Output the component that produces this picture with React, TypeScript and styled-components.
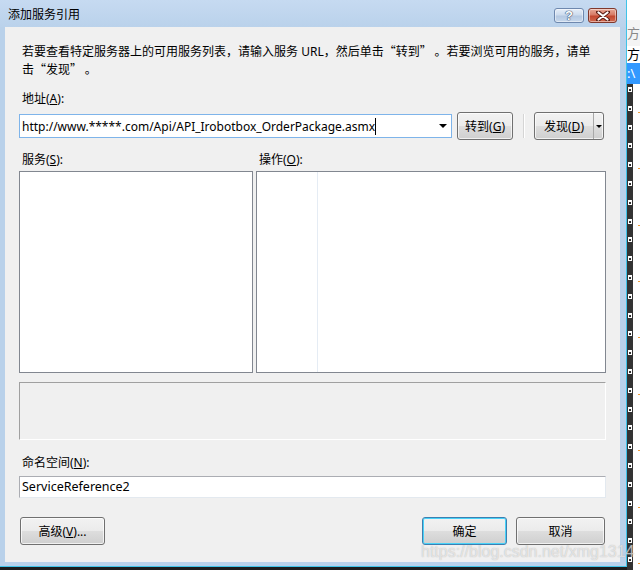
import React from "react";
import styled, { createGlobalStyle } from "styled-components";

const GlobalStyle = createGlobalStyle`
  html, body {
    margin: 0;
    padding: 0;
    background: #1c1c1c;
  }
  body {
    width: 640px;
    height: 570px;
    overflow: hidden;
    font-family: "Noto Sans", "Noto Sans CJK SC", sans-serif;
    font-size: 12px;
    color: #000;
  }
`;

const Screen = styled.div`
  display: flex;
  width: 640px;
  height: 570px;
  overflow: hidden;
`;

const Window = styled.div`
  position: relative;
  width: 626px;
  height: 566px;
  display: flex;
  flex-direction: column;
  background: #b9d1ea;
  border-right: 1px solid #3fc3e8;
  border-bottom: 1px solid #3fc3e8;
  flex-shrink: 0;
`;

const TitleBar = styled.div`
  height: 27px;
  display: flex;
  align-items: flex-start;
  justify-content: space-between;
  padding: 0 9px 0 8px;
  background: linear-gradient(#c6daf1, #bad2eb);
`;

const Title = styled.div`
  margin-top: 6px;
  font-size: 12px;
  line-height: 18px;
  color: #000;
`;

const Caption = styled.div`
  display: flex;
  gap: 4px;
  margin-top: 8px;
`;

const CapButton = styled.div<{ $close?: boolean }>`
  width: ${(p) => (p.$close ? "29px" : "30px")};
  height: 15px;
  box-sizing: border-box;
  border: 1px solid ${(p) => (p.$close ? "#80382c" : "#6e88ae")};
  border-radius: 3px;
  background: ${(p) =>
    p.$close
      ? "linear-gradient(#e7a897 0%, #d77b66 45%, #c3472f 55%, #d06a50 100%)"
      : "linear-gradient(#e6eef8 0%, #cddcee 45%, #b5c9e2 55%, #c7d8ec 100%)"};
  box-shadow: inset 0 0 0 1px rgba(255, 255, 255, 0.45);
  display: flex;
  align-items: center;
  justify-content: center;
`;

const HelpGlyph = styled.span`
  font-family: "Liberation Sans", sans-serif;
  font-weight: bold;
  font-size: 13px;
  line-height: 13px;
  color: #fff;
  text-shadow: 0 0 1px #34496b, 0 0 1px #34496b, 0 0 1px #34496b;
`;

const Client = styled.div`
  flex: 1;
  margin: 0 6px 4px 5px;
  background: #f0f0f0;
  padding: 16px 14px 0 14px;
  display: flex;
  flex-direction: column;
`;

const Intro = styled.div`
  height: 36px;
  padding-left: 3px;
  line-height: 18px;
  white-space: nowrap;
  overflow: hidden;
`;

const Punct = styled.span`
  font-family: "Noto Sans CJK SC", sans-serif;
  line-height: 1;
`;

const Label = styled.div<{ $top: number }>`
  margin-top: ${(p) => p.$top}px;
  padding-left: 3px;
  line-height: 18px;
  white-space: nowrap;
`;

const AddressRow = styled.div`
  margin-top: 4px;
  height: 28px;
  display: flex;
  align-items: center;
`;

const Combo = styled.div`
  width: 433px;
  height: 24px;
  box-sizing: border-box;
  border: 1px solid #7eb4ea;
  background: #fff;
  display: flex;
  align-items: center;
  padding-left: 2px;
`;

const ComboText = styled.div`
  flex: 1;
  font-size: 12px;
  white-space: nowrap;
  overflow: hidden;
  display: flex;
  align-items: center;
`;

const Caret = styled.span`
  display: inline-block;
  width: 1px;
  height: 17px;
  background: #000;
`;

const DropArrow = styled.div`
  width: 0;
  height: 0;
  border-left: 4px solid transparent;
  border-right: 4px solid transparent;
  border-top: 4px solid #000;
  margin-right: 4px;
`;

const Button = styled.div<{ $w: number; $default?: boolean }>`
  width: ${(p) => p.$w}px;
  height: 28px;
  box-sizing: border-box;
  border: 1px solid ${(p) => (p.$default ? "#3c7fb1" : "#707070")};
  border-radius: 3px;
  background: linear-gradient(#f2f2f2 0%, #ebebeb 48%, #dddddd 52%, #cfcfcf 100%);
  box-shadow: inset 0 0 0 1px ${(p) => (p.$default ? "#48d2f8" : "rgba(255,255,255,0.7)")};
  display: flex;
  align-items: center;
  justify-content: center;
  font-size: 12px;
  white-space: nowrap;
  flex-shrink: 0;
`;

const SplitButton = styled(Button)`
  justify-content: flex-start;
  padding: 0;
`;

const SplitMain = styled.div`
  width: 58px;
  text-align: center;
  height: 100%;
  display: flex;
  align-items: center;
  justify-content: center;
  border-right: 1px solid #a8a8a8;
`;

const SplitArrow = styled.div`
  flex: 1;
  display: flex;
  align-items: center;
  justify-content: center;
  padding-top: 1px;
`;

const SmallArrow = styled.div`
  width: 0;
  height: 0;
  border-left: 3px solid transparent;
  border-right: 3px solid transparent;
  border-top: 3px solid #000;
`;

const Separator = styled.div`
  width: 1px;
  height: 24px;
  margin: 0 9px 0 10px;
  background: #d5d5d5;
  border-right: 1px solid #fff;
`;

const Columns = styled.div`
  display: flex;
  gap: 3px;
`;

const Column = styled.div<{ $w: number }>`
  width: ${(p) => p.$w}px;
  display: flex;
  flex-direction: column;
`;

const ListBox = styled.div`
  margin-top: 2px;
  height: 202px;
  box-sizing: border-box;
  border: 1px solid #828790;
  background: #fff;
`;

const OpsDivider = styled.div`
  margin-left: 60px;
  width: 1px;
  height: 200px;
  background: #e5ecf4;
`;

const Description = styled.div`
  margin-top: 9px;
  height: 58px;
  box-sizing: border-box;
  border: 1px solid #a0a0a0;
  border-right-color: #fff;
  border-bottom-color: #fff;
  background: #f0f0f0;
`;

const TextBox = styled.div`
  margin-top: 4px;
  height: 22px;
  box-sizing: border-box;
  border: 1px solid #abadb3;
  border-right-color: #e3e9ef;
  border-bottom-color: #e3e9ef;
  background: #fff;
  padding-left: 2px;
  font-size: 12.5px;
  line-height: 20px;
  white-space: nowrap;
`;

const ButtonRow = styled.div`
  margin-top: 19px;
  display: flex;
  align-items: center;
  padding-left: 1px;
`;

const Spacer = styled.div`
  flex: 1;
`;

const Watermark = styled.div`
  position: absolute;
  z-index: 2;
  left: 421px;
  top: 543px;
  font-family: "Liberation Sans", sans-serif;
  font-size: 16px;
  line-height: 18px;
  color: rgba(255, 255, 255, 0.6);
  text-shadow: 0 0 1px rgba(120, 120, 120, 0.55);
  white-space: nowrap;
  pointer-events: none;
`;

const Strip = styled.div`
  width: 13px;
  height: 570px;
  background: #fff;
  display: flex;
  flex-direction: column;
  overflow: hidden;
  font-size: 13px;
`;

const StripCell = styled.div<{ $h: number; $bg?: string; $color?: string }>`
  height: ${(p) => p.$h}px;
  flex-shrink: 0;
  background: ${(p) => p.$bg || "#fff"};
  color: ${(p) => p.$color || "#000"};
  line-height: ${(p) => p.$h}px;
  white-space: nowrap;
  overflow: hidden;
`;

const StripRow = styled.div`
  height: 18.8px;
  flex-shrink: 0;
  display: flex;
`;

const StripBar = styled.div`
  width: 6px;
  background: #333;
  display: flex;
  justify-content: center;
  padding-top: 3px;
  box-sizing: border-box;
`;

const StripIcon = styled.div`
  width: 4px;
  height: 5px;
  border: 1px solid #fff;
  border-top-width: 2px;
  box-sizing: border-box;
`;

const StripDot = styled.div<{ $on: boolean }>`
  margin: 9px 0 0 5px;
  width: 2px;
  height: 1px;
  background: ${(p) => (p.$on ? "#f0a040" : "transparent")};
`;

function CloseGlyph() {
  return (
    <svg width="14" height="10" viewBox="0 0 14 10">
      <path d="M2 1 L12 9 M12 1 L2 9" stroke="#5a1d14" strokeWidth="4" strokeLinecap="round" />
      <path d="M2.5 1.5 L11.5 8.5 M11.5 1.5 L2.5 8.5" stroke="#fff" strokeWidth="2.2" strokeLinecap="round" />
    </svg>
  );
}

export default function App() {
  const stripRows = Array.from({ length: 26 }, (_, i) => i);
  return (
    <Screen>
      <GlobalStyle />
      <Window>
        <TitleBar>
          <Title>添加服务引用</Title>
          <Caption>
            <CapButton>
              <HelpGlyph>?</HelpGlyph>
            </CapButton>
            <CapButton $close>
              <CloseGlyph />
            </CapButton>
          </Caption>
        </TitleBar>
        <Client>
          <Intro>
            若要查看特定服务器上的可用服务列表<Punct>，</Punct>请输入服务 URL<Punct>，</Punct>然后单击
            <Punct>“</Punct>转到<Punct>” 。</Punct>若要浏览可用的服务<Punct>，</Punct>请单
            <br />
            击<Punct>“</Punct>发现<Punct>” 。</Punct>
          </Intro>
          <Label $top={11}>
            地址(<u>A</u>):
          </Label>
          <AddressRow>
            <Combo>
              <ComboText>
                http://www.*****.com/Api/API_Irobotbox_OrderPackage.asmx
                <Caret />
              </ComboText>
              <DropArrow />
            </Combo>
            <Button $w={56} style={{ marginLeft: 5 }}>
              转到(<u>G</u>)
            </Button>
            <Separator />
            <SplitButton $w={70}>
              <SplitMain>
                发现(<u>D</u>)
              </SplitMain>
              <SplitArrow>
                <SmallArrow />
              </SplitArrow>
            </SplitButton>
          </AddressRow>
          <Columns>
            <Column $w={234}>
              <Label $top={11}>
                服务(<u>S</u>):
              </Label>
              <ListBox />
            </Column>
            <Column $w={350}>
              <Label $top={11}>
                操作(<u>O</u>):
              </Label>
              <ListBox>
                <OpsDivider />
              </ListBox>
            </Column>
          </Columns>
          <Description />
          <Label $top={14}>
            命名空间(<u>N</u>):
          </Label>
          <TextBox>ServiceReference2</TextBox>
          <ButtonRow>
            <Button $w={85}>
              高级(<u>V</u>)...
            </Button>
            <Spacer />
            <Button $w={85} $default>
              确定
            </Button>
            <Button $w={89} style={{ marginLeft: 9, marginRight: 1 }}>
              取消
            </Button>
          </ButtonRow>
        </Client>
        <Watermark>https://blog.csdn.net/xmg1314</Watermark>
      </Window>
      <Strip>
        <StripCell $h={20} />
        <StripCell $h={26} $bg="#f4f4f4" $color="#888">
          方
        </StripCell>
        <StripCell $h={17}>方</StripCell>
        <StripCell $h={21} $bg="#3399ff" $color="#fff">
          :\
        </StripCell>
        {stripRows.map((i) => (
          <StripRow key={i}>
            <StripBar>
              <StripIcon />
            </StripBar>
            <StripDot $on={i % 3 === 1} />
          </StripRow>
        ))}
      </Strip>
    </Screen>
  );
}
